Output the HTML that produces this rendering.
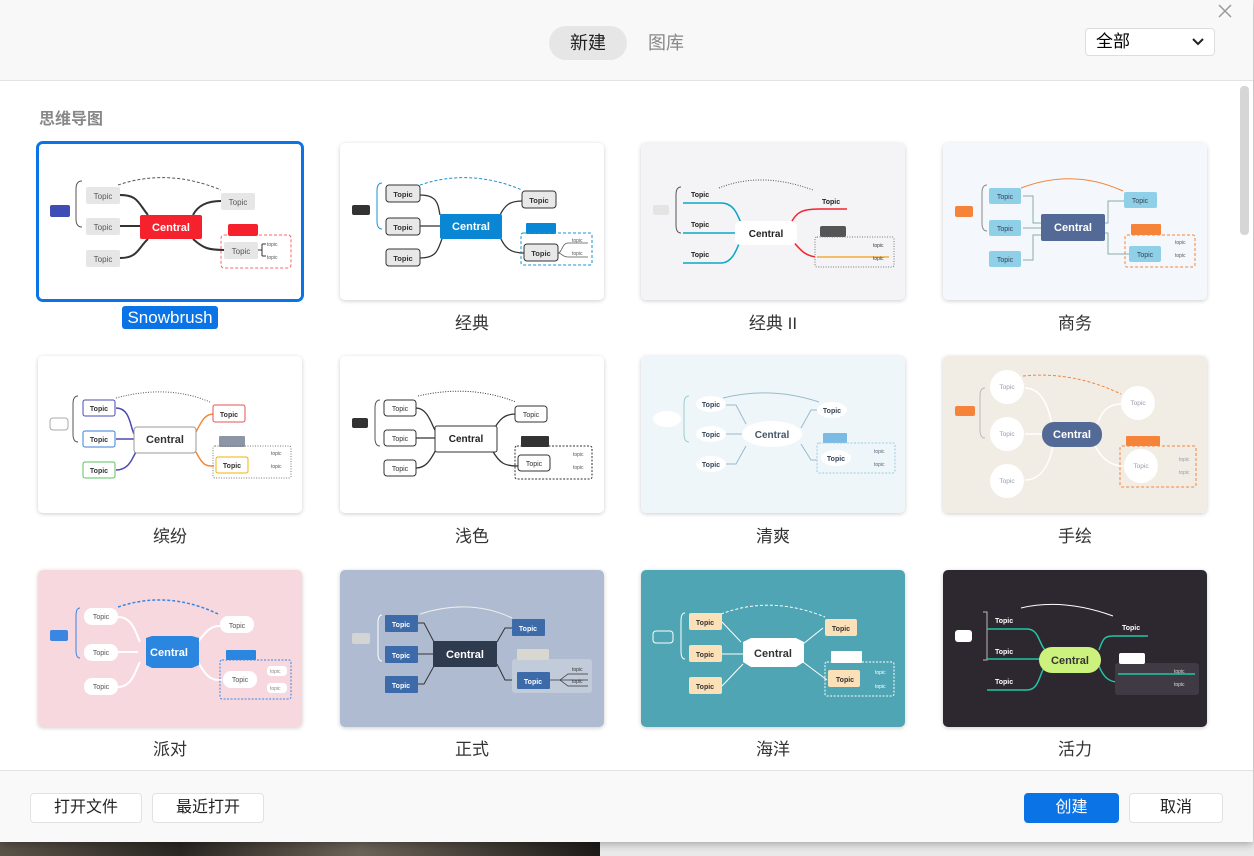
<!DOCTYPE html>
<html><head><meta charset="utf-8"><style>
*{box-sizing:border-box;margin:0;padding:0}
body{width:1254px;height:856px;position:relative;overflow:hidden;background:#e9e9e9;font-family:"Liberation Sans","Noto Sans CJK SC",sans-serif}
.photo{position:absolute;left:0;top:842px;width:600px;height:14px;background:linear-gradient(90deg,#5a5348,#2a2622 30%,#6b6357 60%,#1d1a18)}
.win{position:absolute;left:0;top:0;width:1253px;height:842px;background:#fff;box-shadow:0 2px 8px rgba(0,0,0,.3)}
.head{position:absolute;left:0;top:0;width:1253px;height:81px;background:#f8f8f8;border-bottom:1px solid #e3e3e3}
.tab{position:absolute;top:26px;height:34px;line-height:34px;font-size:18px;text-align:center;border-radius:17px}
.sel{position:absolute;left:1085px;top:28px;width:130px;height:28px;border:1px solid #ddd;border-radius:4px;background:#fff;font-size:17px;line-height:26px;padding-left:10px}
.sec{position:absolute;left:39px;top:105px;font-size:16px;color:#888;font-weight:bold}
.card{position:absolute;width:264px;height:157px;border-radius:5px;box-shadow:0 1px 4px rgba(0,0,0,.2);overflow:hidden}
.card svg{display:block}
.lbl{position:absolute;width:264px;text-align:center;font-size:17px;color:#333}
.foot{position:absolute;left:0;top:770px;width:1253px;height:72px;background:#f9f9f9;border-top:1px solid #e3e3e3}
.btn{position:absolute;top:22px;height:30px;line-height:28px;font-size:16px;text-align:center;border:1px solid #e2e2e2;border-radius:4px;background:#fff;color:#222}
svg text{font-family:"Liberation Sans",sans-serif}
</style></head><body>
<div class="photo"></div>
<div class="win">
<div class="head">
 <div class="tab" style="left:549px;width:78px;background:#e6e6e6;color:#222">新建</div>
 <div class="tab" style="left:640px;width:52px;color:#888">图库</div>
 <div class="sel">全部<svg style="position:absolute;right:10px;top:9px" width="12" height="8" viewBox="0 0 12 8"><path d="M1 1l5 5 5-5" stroke="#222" stroke-width="2" fill="none"/></svg></div>
 <svg style="position:absolute;left:1218px;top:4px" width="14" height="14" viewBox="0 0 14 14"><path d="M1 1l12 12M13 1L1 13" stroke="#999" stroke-width="1.5"/></svg>
</div>
<div style="position:absolute;left:1240px;top:86px;width:9px;height:149px;background:#d6d6d6;border-radius:4px"></div>
<div class="sec">思维导图</div>

<!-- Row 1 -->
<div class="card" style="left:36px;top:141px;width:268px;height:161px;border:3px solid #0a74e6;box-shadow:none;border-radius:7px">
<svg width="262" height="155" viewBox="1 1 262 155"><rect width="264" height="157" fill="#fff"/>
<rect x="12" y="62" width="20" height="12" rx="2" fill="#3d4db5"/><path d="M44,38 q-6,0 -6,8 v30 q0,8 6,8" stroke="#555" fill="none"/>
<path d="M82,52 C100,52 100,60 110,72 M82,83 H102 M82,115 C100,115 100,105 110,96 M155,72 C160,62 170,58 183,58 M155,96 C165,105 170,107 186,107" stroke="#333" stroke-width="2" fill="none"/>
<path d="M80,42 Q130,25 183,47" stroke="#555" stroke-dasharray="3 2" fill="none"/>
<g fill="#e6e6e6"><rect x="48" y="44" width="34" height="17" rx="2"/><rect x="48" y="75" width="34" height="17" rx="2"/><rect x="48" y="107" width="34" height="17" rx="2"/><rect x="183" y="50" width="34" height="17" rx="2"/><rect x="186" y="99" width="34" height="17" rx="2"/></g>
<g font-size="8" fill="#555" text-anchor="middle"><text x="65" y="56">Topic</text><text x="65" y="87">Topic</text><text x="65" y="119">Topic</text><text x="200" y="62">Topic</text><text x="203" y="111">Topic</text></g>
<rect x="102" y="72" width="62" height="24" rx="2" fill="#f5222d"/><text x="133" y="88" font-size="11" font-weight="bold" fill="#fff" text-anchor="middle">Central</text>
<rect x="190" y="81" width="30" height="12" rx="2" fill="#f5222d"/><rect x="183" y="92" width="70" height="33" rx="3" fill="none" stroke="#f5222d" stroke-dasharray="3 2" opacity=".7"/>
<path d="M220,107 h4 M224,101 v12 M224,101 h4 M224,113 h4" stroke="#333" fill="none"/><g font-size="5" fill="#555"><text x="229" y="103">topic</text><text x="229" y="116">topic</text></g>
</svg></div>
<div class="lbl" style="left:38px;top:308px"><span style="background:#0a74e6;color:#fff;border-radius:3px;padding:2px 5px">Snowbrush</span></div>

<div class="card" style="left:340px;top:143px">
<svg width="264" height="157"><rect width="264" height="157" fill="#fff"/>
<rect x="12" y="62" width="18" height="10" rx="2" fill="#333"/><path d="M42,40 q-5,0 -5,8 v30 q0,8 5,8" stroke="#1890d6" fill="none"/>
<path d="M80,52 C98,52 98,62 100,72 M80,83 H100 M80,115 C98,115 98,105 102,96 M160,72 C165,62 170,58 182,58 M160,94 C165,105 170,110 184,110" stroke="#333" stroke-width="1.3" fill="none"/>
<path d="M80,42 Q130,25 182,47" stroke="#1890d6" stroke-dasharray="3 2" fill="none"/>
<g fill="#e8e8e8" stroke="#333"><rect x="46" y="42" width="34" height="17" rx="3"/><rect x="46" y="75" width="34" height="17" rx="3"/><rect x="46" y="106" width="34" height="17" rx="3"/><rect x="182" y="48" width="34" height="17" rx="3"/><rect x="184" y="101" width="34" height="17" rx="3"/></g>
<g font-size="7.5" font-weight="bold" fill="#333" text-anchor="middle"><text x="63" y="54">Topic</text><text x="63" y="87">Topic</text><text x="63" y="118">Topic</text><text x="199" y="60">Topic</text><text x="201" y="113">Topic</text></g>
<rect x="100" y="71" width="62" height="25" rx="2" fill="#0a87d4"/><text x="131" y="87" font-size="11" font-weight="bold" fill="#fff" text-anchor="middle">Central</text>
<rect x="186" y="80" width="30" height="11" rx="1" fill="#0a87d4"/><rect x="181" y="90" width="71" height="32" rx="2" fill="none" stroke="#1890d6" stroke-dasharray="3 2"/>
<path d="M218,110 C222,110 222,100 228,100 H248 M218,110 C222,110 222,114 228,114 H248" stroke="#555" fill="none" stroke-width=".8"/><g font-size="5" fill="#555"><text x="232" y="99">topic</text><text x="232" y="112">topic</text></g>
</svg></div>
<div class="lbl" style="left:340px;top:309px">经典</div>

<div class="card" style="left:641px;top:143px">
<svg width="264" height="157"><rect width="264" height="157" fill="#f4f4f6"/>
<rect x="12" y="62" width="16" height="10" rx="2" fill="#e4e4e4"/><path d="M40,44 q-5,0 -5,8 v30 q0,8 5,8" stroke="#555" fill="none"/>
<path d="M42,60 H80 C92,60 96,70 100,80 M42,90 H95 M42,120 H80 C92,120 96,105 100,96" stroke="#0aa6c7" stroke-width="1.5" fill="none"/>
<path d="M150,80 C155,70 160,66 178,66 H206 M150,96 C160,108 165,114 178,114 H248" stroke="#f5222d" stroke-width="1.5" fill="none"/>
<path d="M78,45 Q120,28 172,47" stroke="#555" stroke-dasharray="1 1.5" fill="none"/>
<g font-size="7" font-weight="bold" fill="#222"><text x="50" y="54">Topic</text><text x="50" y="84">Topic</text><text x="50" y="114">Topic</text><text x="181" y="61">Topic</text><text x="184" y="107">Topic</text></g>
<rect x="94" y="78" width="62" height="24" rx="6" fill="#fff"/><text x="125" y="94" font-size="10" font-weight="bold" fill="#222" text-anchor="middle">Central</text>
<rect x="179" y="83" width="26" height="11" rx="2" fill="#555"/><rect x="174" y="94" width="79" height="30" rx="2" fill="#f4f4f6" stroke="#777" stroke-dasharray="1 1.5"/>
<path d="M176,114 H248" stroke="#f39c12" stroke-width="1.2"/><g font-size="5" fill="#333"><text x="232" y="104">topic</text><text x="232" y="117">topic</text></g>
</svg></div>
<div class="lbl" style="left:641px;top:309px">经典 II</div>

<div class="card" style="left:943px;top:143px">
<svg width="264" height="157"><rect width="264" height="157" fill="#f4f8fc"/>
<rect x="12" y="63" width="18" height="11" rx="2" fill="#f5843a"/><path d="M44,42 q-5,0 -5,8 v30 q0,8 5,8" stroke="#888" fill="none"/>
<path d="M80,53 H90 V80 H98 M80,85 H98 M80,117 H90 V92 H98 M150,80 H165 V58 H182 M150,90 H165 V111 H186" stroke="#8aa" stroke-width="1" fill="none"/>
<path d="M78,45 Q130,25 180,48" stroke="#f5843a" fill="none"/>
<g fill="#8fd0e8"><rect x="46" y="45" width="32" height="16" rx="2"/><rect x="46" y="77" width="32" height="16" rx="2"/><rect x="46" y="108" width="32" height="16" rx="2"/><rect x="181" y="49" width="33" height="16" rx="2"/><rect x="186" y="103" width="32" height="16" rx="2"/></g>
<g font-size="7" fill="#345" text-anchor="middle"><text x="62" y="56">Topic</text><text x="62" y="88">Topic</text><text x="62" y="119">Topic</text><text x="197" y="60">Topic</text><text x="202" y="114">Topic</text></g>
<rect x="98" y="71" width="64" height="27" rx="2" fill="#546a96"/><text x="130" y="88" font-size="11" font-weight="bold" fill="#fff" text-anchor="middle">Central</text>
<rect x="188" y="81" width="30" height="11" rx="1" fill="#f5843a"/><rect x="182" y="92" width="70" height="32" rx="2" fill="none" stroke="#f5843a" stroke-dasharray="3 2"/>
<g font-size="5" fill="#555"><text x="232" y="101">topic</text><text x="232" y="114">topic</text></g>
</svg></div>
<div class="lbl" style="left:943px;top:309px">商务</div>

<!-- Row 2 -->
<div class="card" style="left:38px;top:356px">
<svg width="264" height="157"><rect width="264" height="157" fill="#fff"/>
<rect x="12" y="62" width="18" height="12" rx="3" fill="#fff" stroke="#aaa"/><path d="M40,40 q-5,0 -5,8 v30 q0,8 5,8" stroke="#555" fill="none"/>
<path d="M78,52 C92,52 92,70 96,78 M78,83 H96 M78,114 C92,114 95,100 98,96" stroke="#4a4ab0" stroke-width="1.5" fill="none"/>
<path d="M158,76 C165,62 168,58 176,58 M158,96 C165,110 168,110 176,110" stroke="#f08a3a" stroke-width="1.5" fill="none"/>
<path d="M78,42 Q130,28 172,46" stroke="#555" stroke-dasharray="1 1.5" fill="none"/>
<g fill="#fff"><rect x="45" y="44" width="32" height="16" rx="2" stroke="#4a4ab0"/><rect x="45" y="75" width="32" height="16" rx="2" stroke="#3a7ed6"/><rect x="45" y="106" width="32" height="16" rx="2" stroke="#5cc05c"/><rect x="175" y="49" width="32" height="17" rx="2" stroke="#e05555"/><rect x="178" y="101" width="32" height="16" rx="2" stroke="#f0b000"/></g>
<g font-size="7" font-weight="bold" fill="#333" text-anchor="middle"><text x="61" y="55">Topic</text><text x="61" y="86">Topic</text><text x="61" y="117">Topic</text><text x="191" y="61">Topic</text><text x="194" y="112">Topic</text></g>
<rect x="96" y="71" width="62" height="26" rx="3" fill="#fff" stroke="#999"/><text x="127" y="87" font-size="11" font-weight="bold" fill="#333" text-anchor="middle">Central</text>
<rect x="181" y="80" width="26" height="11" rx="1" fill="#8c96a6"/><rect x="175" y="90" width="78" height="32" rx="2" fill="none" stroke="#777" stroke-dasharray="1 1.5"/>
<g font-size="5" fill="#555"><text x="233" y="99">topic</text><text x="233" y="112">topic</text></g>
</svg></div>
<div class="lbl" style="left:38px;top:522px">缤纷</div>

<div class="card" style="left:340px;top:356px">
<svg width="264" height="157"><rect width="264" height="157" fill="#fff"/>
<rect x="12" y="62" width="16" height="10" rx="2" fill="#333"/><path d="M40,44 q-5,0 -5,8 v30 q0,8 5,8" stroke="#555" fill="none"/>
<path d="M76,52 C88,52 92,70 96,76 M76,82 H96 M76,112 C88,112 92,100 96,94 M152,76 C160,62 165,58 176,58 M152,94 C160,108 165,110 178,110" stroke="#333" stroke-width="1.3" fill="none"/>
<path d="M78,40 Q130,28 176,46" stroke="#333" stroke-dasharray="1 1.5" fill="none"/>
<g fill="#fff" stroke="#333"><rect x="44" y="44" width="32" height="16" rx="3"/><rect x="44" y="74" width="32" height="16" rx="3"/><rect x="44" y="104" width="32" height="16" rx="3"/><rect x="175" y="50" width="32" height="16" rx="3"/><rect x="178" y="99" width="32" height="16" rx="3"/></g>
<g font-size="7" fill="#333" text-anchor="middle"><text x="60" y="55">Topic</text><text x="60" y="85">Topic</text><text x="60" y="115">Topic</text><text x="191" y="61">Topic</text><text x="194" y="110">Topic</text></g>
<rect x="95" y="70" width="62" height="26" rx="2" fill="#fff" stroke="#333"/><text x="126" y="86" font-size="10" font-weight="bold" fill="#222" text-anchor="middle">Central</text>
<rect x="181" y="80" width="28" height="11" rx="1" fill="#333"/><rect x="175" y="90" width="77" height="33" rx="2" fill="none" stroke="#333" stroke-dasharray="2 1.5"/>
<g font-size="5" fill="#555"><text x="233" y="100">topic</text><text x="233" y="113">topic</text></g>
</svg></div>
<div class="lbl" style="left:340px;top:522px">浅色</div>

<div class="card" style="left:641px;top:356px">
<svg width="264" height="157"><rect width="264" height="157" fill="#eef6fa"/>
<ellipse cx="26" cy="63" rx="14" ry="8" fill="#fff"/><path d="M48,40 q-5,0 -5,8 v30 q0,8 5,8" stroke="#9cc" fill="none"/>
<path d="M84,49 H95 L105,68 M84,78 H102 M84,108 H95 L105,90 M160,72 L170,54 H176 M160,88 L170,104 H176" stroke="#9bc" stroke-width="1" fill="none"/>
<path d="M82,42 Q130,30 178,46" stroke="#9bc" fill="none"/>
<g fill="#fff"><ellipse cx="70" cy="48" rx="15" ry="8"/><ellipse cx="70" cy="78" rx="15" ry="8"/><ellipse cx="70" cy="108" rx="15" ry="8"/><ellipse cx="191" cy="54" rx="15" ry="8"/><ellipse cx="195" cy="102" rx="15" ry="8"/></g>
<g font-size="7" font-weight="bold" fill="#345" text-anchor="middle"><text x="70" y="51">Topic</text><text x="70" y="81">Topic</text><text x="70" y="111">Topic</text><text x="191" y="57">Topic</text><text x="195" y="105">Topic</text></g>
<ellipse cx="131" cy="78" rx="30" ry="13" fill="#fff"/><text x="131" y="82" font-size="10" font-weight="bold" fill="#456" text-anchor="middle">Central</text>
<rect x="182" y="77" width="24" height="10" rx="1" fill="#7abbe6"/><rect x="176" y="87" width="78" height="30" rx="2" fill="none" stroke="#9cd" stroke-dasharray="2 1.5"/>
<g font-size="5" fill="#567"><text x="233" y="97">topic</text><text x="233" y="110">topic</text></g>
</svg></div>
<div class="lbl" style="left:641px;top:522px">清爽</div>

<div class="card" style="left:943px;top:356px">
<svg width="264" height="157"><rect width="264" height="157" fill="#f2ede4"/>
<rect x="12" y="50" width="20" height="10" rx="2" fill="#f5843a"/><path d="M42,32 q-5,0 -5,8 v34 q0,8 5,8" stroke="#bbb" fill="none"/>
<path d="M82,32 C102,32 108,60 110,76 M82,78 H100 M82,124 C102,124 108,100 110,90 M152,74 C158,55 165,48 178,48 M152,90 C160,105 170,110 180,110" stroke="#fff" stroke-width="1.5" fill="none"/>
<path d="M80,20 Q130,15 178,38" stroke="#f5843a" stroke-dasharray="3 2" fill="none"/>
<g fill="#fff"><circle cx="64" cy="31" r="17"/><circle cx="64" cy="78" r="17"/><circle cx="64" cy="125" r="17"/><circle cx="195" cy="47" r="17"/><circle cx="198" cy="110" r="17"/></g>
<g font-size="6.5" fill="#99a" text-anchor="middle"><text x="64" y="33">Topic</text><text x="64" y="80">Topic</text><text x="64" y="127">Topic</text><text x="195" y="49">Topic</text><text x="198" y="112">Topic</text></g>
<rect x="99" y="66" width="60" height="25" rx="12" fill="#546a96"/><text x="129" y="82" font-size="11" font-weight="bold" fill="#fff" text-anchor="middle">Central</text>
<rect x="183" y="80" width="34" height="10" rx="1" fill="#f5843a"/><rect x="177" y="90" width="76" height="41" rx="2" fill="none" stroke="#f5843a" stroke-dasharray="3 2"/>
<g font-size="5" fill="#99a"><text x="236" y="105">topic</text><text x="236" y="118">topic</text></g>
</svg></div>
<div class="lbl" style="left:943px;top:522px">手绘</div>

<!-- Row 3 -->
<div class="card" style="left:38px;top:570px">
<svg width="264" height="157"><rect width="264" height="157" fill="#f8d8df"/>
<rect x="12" y="60" width="18" height="11" rx="2" fill="#3a86e0"/><path d="M42,38 q-4,0 -4,8 v34 q0,8 4,8" stroke="#3a86e0" fill="none"/>
<path d="M80,47 C95,47 98,64 102,72 M80,82 H100 M80,117 C95,117 98,98 102,92 M160,72 C170,58 175,56 182,56 M160,92 C170,110 175,110 184,110" stroke="#fff" stroke-width="2" fill="none"/>
<path d="M80,37 Q130,20 180,44" stroke="#3a86e0" stroke-width="1.5" stroke-dasharray="3 2" fill="none"/>
<g fill="#fff"><rect x="46" y="38" width="34" height="17" rx="8"/><rect x="46" y="74" width="34" height="17" rx="8"/><rect x="46" y="108" width="34" height="17" rx="8"/><rect x="182" y="46" width="34" height="17" rx="8"/><rect x="185" y="101" width="34" height="17" rx="8"/></g>
<g font-size="7" fill="#555" text-anchor="middle"><text x="63" y="49">Topic</text><text x="63" y="85">Topic</text><text x="63" y="119">Topic</text><text x="199" y="58">Topic</text><text x="202" y="112">Topic</text></g>
<path d="M108,68 L114,66 H154 L161,68 V95 L154,98 H114 L108,95 Z" fill="#2b86e0"/><text x="131" y="86" font-size="11" font-weight="bold" fill="#fff" text-anchor="middle">Central</text>
<rect x="188" y="80" width="30" height="10" rx="1" fill="#2b86e0"/><rect x="182" y="90" width="71" height="39" rx="2" fill="none" stroke="#3a86e0" stroke-dasharray="2 1.5"/>
<g fill="#fff"><rect x="229" y="96" width="20" height="10" rx="4"/><rect x="229" y="113" width="20" height="10" rx="4"/></g><g font-size="5" fill="#888"><text x="232" y="103">topic</text><text x="232" y="120">topic</text></g>
</svg></div>
<div class="lbl" style="left:38px;top:735px">派对</div>

<div class="card" style="left:340px;top:570px">
<svg width="264" height="157"><rect width="264" height="157" fill="#aebbd0"/>
<rect x="12" y="63" width="18" height="11" rx="2" fill="#d4d4d4"/><path d="M42,45 q-4,0 -4,8 v30 q0,8 4,8" stroke="#fff" fill="none"/>
<path d="M78,53 H84 L94,72 M78,84 H94 M78,114 H84 L94,96 M157,72 L165,58 H172 M157,94 L165,110 H172" stroke="#333" stroke-width="1" fill="none"/>
<path d="M80,44 Q130,28 172,48" stroke="#eee" fill="none"/>
<g fill="#3d6aa8"><rect x="45" y="45" width="33" height="17" rx="1"/><rect x="45" y="76" width="33" height="17" rx="1"/><rect x="45" y="106" width="33" height="17" rx="1"/><rect x="172" y="49" width="33" height="17" rx="1"/></g>
<rect x="172" y="89" width="80" height="34" rx="3" fill="#c2cbd9"/><rect x="177" y="79" width="32" height="11" rx="1" fill="#d8d8d0"/><rect x="177" y="102" width="33" height="17" rx="1" fill="#3d6aa8"/>
<g font-size="7" font-weight="bold" fill="#fff" text-anchor="middle"><text x="61" y="57">Topic</text><text x="61" y="88">Topic</text><text x="61" y="118">Topic</text><text x="188" y="61">Topic</text><text x="193" y="114">Topic</text></g>
<rect x="93" y="71" width="64" height="26" rx="1" fill="#2e3a4d"/><text x="125" y="88" font-size="11" font-weight="bold" fill="#fff" text-anchor="middle">Central</text>
<path d="M210,110 H248 M220,110 L228,104 H248 M220,110 L228,116 H248" stroke="#333" stroke-width=".7" fill="none"/><g font-size="5" fill="#333"><text x="232" y="101">topic</text><text x="232" y="113">topic</text></g>
</svg></div>
<div class="lbl" style="left:340px;top:735px">正式</div>

<div class="card" style="left:641px;top:570px">
<svg width="264" height="157"><rect width="264" height="157" fill="#4fa5b3"/>
<rect x="12" y="61" width="20" height="12" rx="3" fill="none" stroke="#fff"/><path d="M44,43 q-4,0 -4,8 v30 q0,8 4,8" stroke="#fff" fill="none"/>
<path d="M81,52 L100,72 M81,84 H102 M81,116 L102,94 M162,74 L182,58 M162,92 L186,110" stroke="#fff" stroke-width="1" fill="none"/>
<path d="M80,44 Q130,25 184,47" stroke="#fff" stroke-dasharray="3 2" fill="none"/>
<g fill="#fce0b8"><rect x="48" y="43" width="33" height="17" rx="2"/><rect x="48" y="75" width="33" height="17" rx="2"/><rect x="48" y="107" width="33" height="17" rx="2"/><rect x="184" y="49" width="32" height="17" rx="2"/><rect x="187" y="100" width="32" height="17" rx="2"/></g>
<g font-size="7" font-weight="bold" fill="#333" text-anchor="middle"><text x="64" y="55">Topic</text><text x="64" y="87">Topic</text><text x="64" y="119">Topic</text><text x="200" y="61">Topic</text><text x="204" y="112">Topic</text></g>
<path d="M102,72 L110,68 H155 L163,72 V92 L155,97 H110 L102,92 Z" fill="#fff"/><text x="132" y="87" font-size="11" font-weight="bold" fill="#333" text-anchor="middle">Central</text>
<rect x="190" y="81" width="31" height="12" rx="1" fill="#fff"/><rect x="184" y="92" width="69" height="34" rx="2" fill="none" stroke="#fff" stroke-dasharray="2 1.5"/>
<g font-size="5" fill="#fff"><text x="234" y="104">topic</text><text x="234" y="118">topic</text></g>
</svg></div>
<div class="lbl" style="left:641px;top:735px">海洋</div>

<div class="card" style="left:943px;top:570px">
<svg width="264" height="157"><rect width="264" height="157" fill="#2d2730"/>
<rect x="12" y="60" width="17" height="12" rx="3" fill="#fff"/><path d="M40,42 h4 v48 h-4" stroke="#bbb" fill="none"/>
<path d="M44,59 H84 C96,59 96,74 102,80 M44,89 H100 M44,120 H84 C96,120 96,105 102,96 M156,80 C160,68 162,66 170,66 H205 M156,96 C160,106 165,112 175,112 H252" stroke="#23c5a6" stroke-width="1.5" fill="none"/>
<path d="M78,38 Q120,28 170,46" stroke="#fff" fill="none"/>
<g font-size="7" font-weight="bold" fill="#fff"><text x="52" y="53">Topic</text><text x="52" y="84">Topic</text><text x="52" y="114">Topic</text><text x="179" y="60">Topic</text><text x="183" y="107">Topic</text></g>
<rect x="172" y="93" width="84" height="32" rx="3" fill="#3f3a44"/><path d="M175,104 H252" stroke="#23c5a6" stroke-width="1.5"/>
<rect x="96" y="77" width="62" height="26" rx="13" fill="#ccf27d"/><text x="127" y="94" font-size="11" font-weight="bold" fill="#333" text-anchor="middle">Central</text>
<rect x="176" y="83" width="26" height="11" rx="2" fill="#fff"/>
<g font-size="5" fill="#ddd"><text x="231" y="103">topic</text><text x="231" y="116">topic</text></g>
</svg></div>
<div class="lbl" style="left:943px;top:735px">活力</div>

<div class="foot">
 <div class="btn" style="left:30px;width:112px">打开文件</div>
 <div class="btn" style="left:152px;width:112px">最近打开</div>
 <div class="btn" style="left:1024px;width:95px;background:#0a74e6;border-color:#0a74e6;color:#fff">创建</div>
 <div class="btn" style="left:1129px;width:94px">取消</div>
</div>
</div>
</body></html>
